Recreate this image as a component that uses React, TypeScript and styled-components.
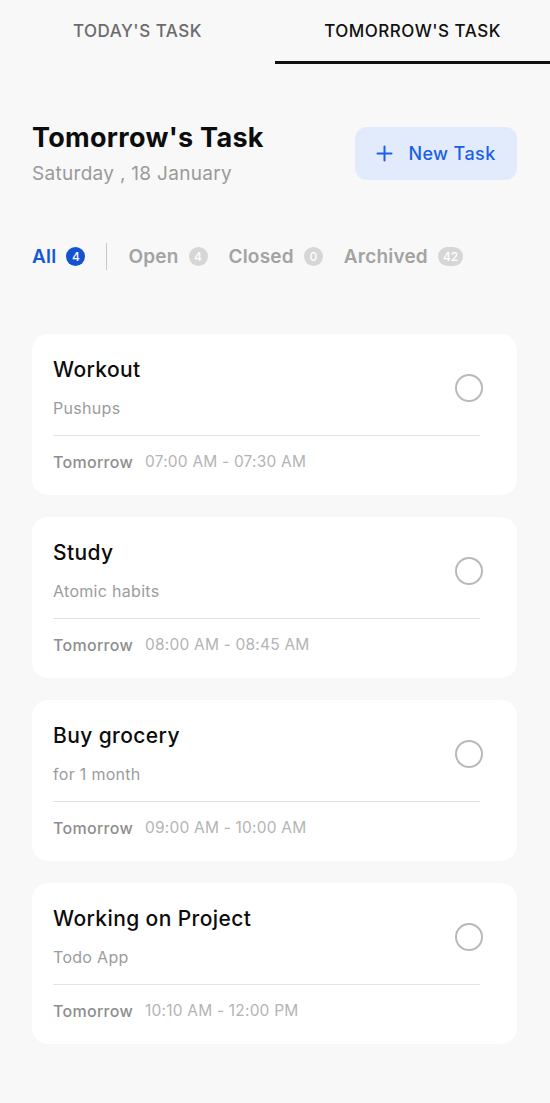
import React from "react";
import styled, { createGlobalStyle } from "styled-components";

const Global = createGlobalStyle`
  html, body { margin: 0; padding: 0; background: #f8f8f8; }
  body { font-family: Inter, "Noto Sans", sans-serif; -webkit-font-smoothing: antialiased; }
  * { box-sizing: border-box; }
`;

const Page = styled.div`
  width: 550px;
  min-height: 1103px;
  background: #f8f8f8;
  display: flex;
  flex-direction: column;
`;

const Tabs = styled.div`
  display: grid;
  grid-template-columns: 1fr 1fr;
  height: 64px;
`;

const Tab = styled.div<{ $active?: boolean }>`
  display: flex;
  align-items: center;
  justify-content: center;
  font-size: 17px;
  font-weight: 500;
  letter-spacing: 0.5px;
  color: ${(p) => (p.$active ? "#111" : "#6b6b6b")};
  border-bottom: 3px solid ${(p) => (p.$active ? "#111" : "transparent")};
`;

const Header = styled.div`
  display: flex;
  justify-content: space-between;
  align-items: center;
  padding: 56px 33px 0 32px;
`;

const TitleBlock = styled.div`
  display: flex;
  flex-direction: column;
  gap: 4px;
`;

const Title = styled.h1`
  margin: 0;
  font-size: 27px;
  line-height: 36px;
  font-weight: 700;
  letter-spacing: 0.3px;
  color: #0c0c0c;
`;

const DateText = styled.div`
  font-size: 19px;
  line-height: 28px;
  letter-spacing: 0.3px;
  color: #9a9a9a;
`;

const NewButton = styled.button`
  width: 162px;
  height: 53px;
  border: none;
  border-radius: 12px;
  background: #e2ebfb;
  color: #1a5fe6;
  font-family: inherit;
  font-size: 18px;
  font-weight: 500;
  letter-spacing: 0.4px;
  display: flex;
  align-items: center;
  justify-content: center;
  gap: 15px;
  margin-top: -2px;
`;

const Filters = styled.div`
  display: flex;
  align-items: center;
  padding: 0 32px;
  margin-top: 54px;
  height: 28px;
`;

const Filter = styled.div<{ $active?: boolean }>`
  display: flex;
  align-items: center;
  gap: 10px;
  font-size: 19px;
  font-weight: 600;
  letter-spacing: 0.2px;
  color: ${(p) => (p.$active ? "#1458d6" : "#a3a3a3")};
  margin-right: 21px;
`;

const Badge = styled.span<{ $active?: boolean }>`
  min-width: 19px;
  height: 19px;
  padding: 0 5px;
  border-radius: 10px;
  display: inline-flex;
  align-items: center;
  justify-content: center;
  font-size: 12px;
  font-weight: 500;
  letter-spacing: 0;
  color: #fff;
  background: ${(p) => (p.$active ? "#1452d0" : "#d6d6d6")};
`;

const Divider = styled.div`
  width: 1px;
  height: 27px;
  background: #c8c8c8;
  margin-right: 21px;
`;

const List = styled.div`
  display: flex;
  flex-direction: column;
  gap: 22px;
  padding: 64px 33px 0 32px;
`;

const Card = styled.div`
  background: #fff;
  border-radius: 16px;
  height: 161px;
  padding: 21px 34px 0 21px;
  display: flex;
  flex-direction: column;
`;

const CardTop = styled.div`
  display: flex;
  align-items: center;
  justify-content: space-between;
`;

const CardText = styled.div`
  display: flex;
  flex-direction: column;
  gap: 11px;
`;

const CardTitle = styled.div`
  font-size: 21px;
  line-height: 30px;
  font-weight: 500;
  letter-spacing: 0.4px;
  color: #0c0c0c;
`;

const CardSub = styled.div`
  font-size: 16px;
  line-height: 24px;
  letter-spacing: 0.3px;
  color: #9c9c9c;
`;

const Check = styled.div`
  width: 28px;
  height: 28px;
  border-radius: 50%;
  border: 2px solid #b9b9b9;
  margin-top: 1px;
`;

const Rule = styled.div`
  height: 1px;
  background: #e3e3e3;
  margin: 15px 3px 0 0;
`;

const Footer = styled.div`
  display: flex;
  gap: 12px;
  align-items: center;
  margin-top: 14px;
  line-height: 24px;
`;

const When = styled.span`
  font-size: 16px;
  letter-spacing: 0.3px;
  color: #8e8e8e;
  font-weight: 500;
`;

const Time = styled.span`
  font-size: 15.5px;
  letter-spacing: 0.2px;
  color: #b4b4b4;
`;

const tasks = [
  { title: "Workout", sub: "Pushups", time: "07:00 AM - 07:30 AM" },
  { title: "Study", sub: "Atomic habits", time: "08:00 AM - 08:45 AM" },
  { title: "Buy grocery", sub: "for 1 month", time: "09:00 AM - 10:00 AM" },
  { title: "Working on Project", sub: "Todo App", time: "10:10 AM - 12:00 PM" },
];

export default function App() {
  return (
    <Page>
      <Global />
      <Tabs>
        <Tab>TODAY'S TASK</Tab>
        <Tab $active>TOMORROW'S TASK</Tab>
      </Tabs>
      <Header>
        <TitleBlock>
          <Title>Tomorrow's Task</Title>
          <DateText>Saturday , 18 January</DateText>
        </TitleBlock>
        <NewButton>
          <svg width="17" height="17" viewBox="0 0 17 17" fill="none">
            <path d="M8.5 1.5v14M1.5 8.5h14" stroke="#1a5fe6" strokeWidth="2" strokeLinecap="round" />
          </svg>
          New Task
        </NewButton>
      </Header>
      <Filters>
        <Filter $active>
          All <Badge $active>4</Badge>
        </Filter>
        <Divider />
        <Filter>
          Open <Badge>4</Badge>
        </Filter>
        <Filter>
          Closed <Badge>0</Badge>
        </Filter>
        <Filter>
          Archived <Badge>42</Badge>
        </Filter>
      </Filters>
      <List>
        {tasks.map((t) => (
          <Card key={t.title}>
            <CardTop>
              <CardText>
                <CardTitle>{t.title}</CardTitle>
                <CardSub>{t.sub}</CardSub>
              </CardText>
              <Check />
            </CardTop>
            <Rule />
            <Footer>
              <When>Tomorrow</When>
              <Time>{t.time}</Time>
            </Footer>
          </Card>
        ))}
      </List>
    </Page>
  );
}
